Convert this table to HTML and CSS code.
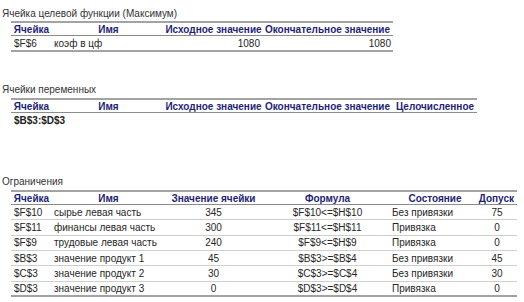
FILE: index.html
```html
<!DOCTYPE html>
<html lang="ru">
<head>
<meta charset="utf-8">
<link rel="stylesheet" href="styles.css">
</head>
<body>
<div class="sheet">
  <div class="title">Ячейка целевой функции (Максимум)</div>
  <div class="tbl t1">
    <div class="h">Ячейка</div><div class="h">Имя</div><div class="h">Исходное значение</div><div class="h">Окончательное значение</div>
    <div class="c l last">$F$6</div><div class="c n last">коэф в цф</div><div class="c r last">1080</div><div class="c r last">1080</div>
  </div>
  <div class="blank2"></div>
  <div class="title">Ячейки переменных</div>
  <div class="tbl t2">
    <div class="h">Ячейка</div><div class="h">Имя</div><div class="h">Исходное значение</div><div class="h">Окончательное значение</div><div class="h">Целочисленное</div>
    <div class="c l b">$B$3:$D$3</div><div class="c"></div><div class="c"></div><div class="c"></div><div class="c"></div>
  </div>
  <div class="blank3"></div>
  <div class="title">Ограничения</div>
  <div class="tbl t3">
    <div class="h">Ячейка</div><div class="h">Имя</div><div class="h">Значение ячейки</div><div class="h">Формула</div><div class="h">Состояние</div><div class="h hr">Допуск</div>

    <div class="c l">$F$10</div><div class="c n">сырье левая часть</div><div class="c m">345</div><div class="c m">$F$10&lt;=$H$10</div><div class="c s">Без привязки</div><div class="c m">75</div>
    <div class="c l">$F$11</div><div class="c n">финансы левая часть</div><div class="c m">300</div><div class="c m">$F$11&lt;=$H$11</div><div class="c s">Привязка</div><div class="c m">0</div>
    <div class="c l">$F$9</div><div class="c n">трудовые левая часть</div><div class="c m">240</div><div class="c m">$F$9&lt;=$H$9</div><div class="c s">Привязка</div><div class="c m">0</div>
    <div class="c l">$B$3</div><div class="c n">значение продукт 1</div><div class="c m">45</div><div class="c m">$B$3&gt;=$B$4</div><div class="c s">Без привязки</div><div class="c m">45</div>
    <div class="c l">$C$3</div><div class="c n">значение продукт 2</div><div class="c m">30</div><div class="c m">$C$3&gt;=$C$4</div><div class="c s">Без привязки</div><div class="c m">30</div>
    <div class="c l last">$D$3</div><div class="c n last">значение продукт 3</div><div class="c m last">0</div><div class="c m last">$D$3&gt;=$D$4</div><div class="c s last">Привязка</div><div class="c m last">0</div>
  </div>
</div>
</body>
</html>
```
FILE: styles.css
```css
html, body {
  margin: 0;
  padding: 0;
  background: #ffffff;
}
body {
  font-family: "Liberation Sans", Arial, sans-serif;
  font-size: 10px;
  color: #262626;
  width: 524px;
  height: 302px;
  overflow: hidden;
}
.sheet {
  padding-top: 5.67px;
}
.title {
  height: 15.33px;
  line-height: 15.33px;
  padding-left: 2px;
  color: #333333;
  white-space: nowrap;
}
.blank2 { height: 30.67px; }
.blank3 { height: 46px; }
.tbl {
  display: grid;
  margin-left: 11px;
  grid-auto-rows: 15.33px;
}
.t1 { grid-template-columns: 41px 113px 97px 131px; }
.t2 { grid-template-columns: 41px 113px 97px 131px 84px; }
.t3 { grid-template-columns: 41px 113px 97px 131px 84px 40px; }
.h, .c {
  box-sizing: border-box;
  display: flex;
  align-items: center;
  white-space: nowrap;
  min-width: 0;
}
.h {
  font-weight: bold;
  color: #1f1f78;
  justify-content: center;
  border-top: 2px solid #a3a3a3;
  border-bottom: 1px solid #8c8c8c;
  padding-top: 1px;
}
.hr {
  justify-content: flex-end;
  padding-right: 3px;
  overflow: visible;
}
.c {
  border-bottom: 1px solid #cfcfcf;
}
.c.last {
  border-bottom: 2px solid #a3a3a3;
  padding-top: 1px;
}
.t2 .c { border-bottom: none; }
.l { padding-left: 3px; }
.n { padding-left: 2px; }
.r { justify-content: flex-end; padding-right: 2px; }
.m { justify-content: center; }
.s { padding-left: 0; margin-left: -1px; }
.b { font-weight: bold; color: #222; }
```
